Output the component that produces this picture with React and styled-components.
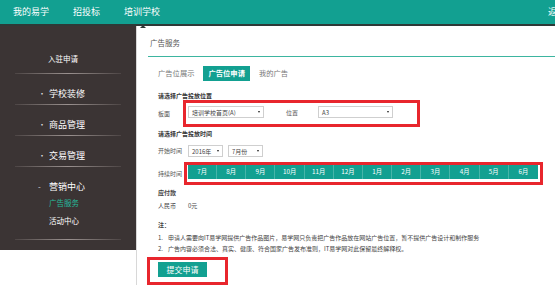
import React from "react";
import styled, { createGlobalStyle } from "styled-components";

const TEAL = "#12a091";
const RED = "#e8262d";

const Global = createGlobalStyle`
  html, body { margin: 0; padding: 0; overflow: hidden; background: #fff; }
  body { font-family: "Noto Sans CJK SC", "Noto Sans", sans-serif; color: #444; }
  * { box-sizing: border-box; }
`;

const Page = styled.div`
  width: 600px;
`;

const TopBar = styled.div`
  position: relative;
  height: 26px;
  background: ${TEAL};
  border-bottom: 2px solid #2e3937;
  display: flex;
  align-items: center;
  padding: 0 16px 0 13px;
`;

const NavItem = styled.div`
  position: relative;
  color: #fff;
  font-size: 9px;
  line-height: 12px;
  margin-right: ${(p) => p.$gap || 0}px;
  margin-left: ${(p) => (p.$right ? "auto" : "0")};
`;

const Caret = styled.div`
  position: absolute;
  left: 16px;
  top: 19px;
  width: 0;
  height: 0;
  border-left: 3px solid transparent;
  border-right: 3px solid transparent;
  border-bottom: 3px solid #2e3937;
`;

const Body = styled.div`
  display: flex;
  align-items: flex-start;
`;

const Sidebar = styled.div`
  width: 136px;
  height: 224px;
  background: #3b3434;
  display: flex;
  flex-direction: column;
`;

const SideHead = styled.div`
  height: 47px;
  padding: 28px 0 0 48px;
  color: #fff;
  font-size: 7.5px;
  line-height: 10px;
`;

const Sep = styled.div`
  height: 1px;
  margin: 0 15px;
  background: linear-gradient(to right, rgba(150,140,138,0.2), #9a918f 50%, rgba(150,140,138,0.2));
`;

const Spacer = styled.div`
  height: ${(p) => p.$h}px;
`;

const SideItem = styled.div`
  display: flex;
  align-items: center;
  height: 30px;
  padding: 14px 0 4px 38px;
  color: #fff;
  font-size: 9px;
  line-height: 12px;
`;

const Bullet = styled.span`
  width: 11px;
  font-size: 8px;
  color: #ddd;
`;

const SubItem = styled.div`
  padding-left: 49px;
  margin-top: ${(p) => p.$mt}px;
  color: ${(p) => (p.$active ? "#26b99a" : "#fff")};
  font-size: 7.5px;
  line-height: 10px;
`;

const Main = styled.div`
  flex: 1;
  background: #fff;
  border-left: 1px solid #d8d8d8;
  min-height: 260px;
`;

const PanelHead = styled.div`
  margin-left: 11px;
  padding: 10px 0 6px 2px;
  border-bottom: 1px solid #3db5a0;
  font-size: 7.5px;
  line-height: 14px;
  color: #555;
`;

const Content = styled.div`
  padding-left: 21px;
  display: flex;
  flex-direction: column;
  align-items: flex-start;
`;

const Tabs = styled.div`
  display: flex;
  gap: 4px;
  margin: 9px 0 0 -5px;
`;

const Tab = styled.div`
  height: 15px;
  padding: 0 5px;
  line-height: 15px;
  font-size: 7.3px;
  color: ${(p) => (p.$active ? "#fff" : "#777")};
  background: ${(p) => (p.$active ? TEAL : "transparent")};
  font-weight: ${(p) => (p.$active ? 700 : 400)};
`;

const SectionTitle = styled.div`
  margin-top: ${(p) => p.$mt}px;
  font-size: 6px;
  line-height: 8px;
  font-weight: 700;
  color: #333;
`;

const Row = styled.div`
  display: flex;
  align-items: center;
  margin-top: ${(p) => p.$mt || 0}px;
`;

const Label = styled.div`
  width: ${(p) => p.$w}px;
  font-size: 6px;
  line-height: 8px;
  color: #555;
`;

const RedBox = styled.div`
  display: flex;
  align-items: center;
  border: 3px solid ${RED};
  padding: ${(p) => p.$pad};
`;

const Select = styled.div`
  width: ${(p) => p.$w}px;
  height: 12px;
  border: 1px solid #cfcfcf;
  background: #fff;
  display: flex;
  align-items: center;
  justify-content: space-between;
  padding: 0 3px;
  margin-right: ${(p) => p.$mr || 0}px;
  font-size: 6px;
  color: #444;
`;

const Arrow = styled.span`
  width: 0;
  height: 0;
  border-left: 1.5px solid transparent;
  border-right: 1.5px solid transparent;
  border-top: 2.5px solid #222;
`;

const InlineLabel = styled.div`
  width: ${(p) => p.$w}px;
  font-size: 6px;
  color: #555;
`;

const Months = styled.div`
  display: grid;
  grid-template-columns: repeat(12, 1fr);
  width: 350px;
  height: 14px;
  background: ${TEAL};
`;

const Month = styled.div`
  border-right: 1px solid rgba(255, 255, 255, 0.22);
  color: #fff;
  font-size: 6.3px;
  line-height: 14px;
  text-align: center;
  &:last-child { border-right: none; }
`;

const Text = styled.div`
  margin-top: ${(p) => p.$mt || 0}px;
  font-size: 6px;
  line-height: ${(p) => p.$lh || 8}px;
  color: #444;
  font-weight: ${(p) => (p.$bold ? 700 : 400)};
  white-space: nowrap;
`;

const Money = styled.span`
  display: inline-block;
  width: 30px;
`;

const NoteNum = styled.span`
  display: inline-block;
  width: 10px;
`;

const SubmitBox = styled(RedBox)`
  margin-top: 3px;
  margin-left: -11px;
`;

const Submit = styled.div`
  width: 49px;
  height: 15px;
  background: ${TEAL};
  color: #fff;
  font-size: 8px;
  line-height: 15px;
  text-align: center;
`;

const months = ["7月", "8月", "9月", "10月", "11月", "12月", "1月", "2月", "3月", "4月", "5月", "6月"];

export default function App() {
  return (
    <Page>
      <Global />
      <TopBar>
        <NavItem $gap={24}>我的易学</NavItem>
        <NavItem $gap={24}>招投标</NavItem>
        <NavItem>
          培训学校
          <Caret />
        </NavItem>
        <NavItem $right>返回首页</NavItem>
      </TopBar>
      <Body>
        <Sidebar>
          <SideHead>入驻申请</SideHead>
          <Sep />
          <SideItem><Bullet>•</Bullet>学校装修</SideItem>
          <Sep />
          <SideItem><Bullet>•</Bullet>商品管理</SideItem>
          <Sep />
          <SideItem><Bullet>•</Bullet>交易管理</SideItem>
          <Sep />
          <SideItem><Bullet>-</Bullet>营销中心</SideItem>
          <SubItem $active $mt={1}>广告服务</SubItem>
          <SubItem $mt={8}>活动中心</SubItem>
          <Spacer $h={13} />
          <Sep />
        </Sidebar>
        <Main>
          <PanelHead>广告服务</PanelHead>
          <Content>
            <Tabs>
              <Tab>广告位展示</Tab>
              <Tab $active>广告位申请</Tab>
              <Tab>我的广告</Tab>
            </Tabs>
            <SectionTitle $mt={11}>请选择广告投放位置</SectionTitle>
            <Row>
              <Label $w={25}>板面</Label>
              <RedBox $pad="3px 24px 6px 2px">
                <Select $w={76} $mr={22}>培训学校首页(A)<Arrow /></Select>
                <InlineLabel $w={32}>位置</InlineLabel>
                <Select $w={75}>A3<Arrow /></Select>
              </RedBox>
            </Row>
            <SectionTitle $mt={3}>请选择广告投放时间</SectionTitle>
            <Row $mt={7}>
              <Label $w={30}>开始时间</Label>
              <Select $w={35} $mr={5}>2016年<Arrow /></Select>
              <Select $w={35}>7月份<Arrow /></Select>
            </Row>
            <Row $mt={5}>
              <Label $w={26}>持续时间</Label>
              <RedBox $pad="0 2px 3px 1px">
                <Months>
                  {months.map((m) => (
                    <Month key={m}>{m}</Month>
                  ))}
                </Months>
              </RedBox>
            </Row>
            <Text $mt={4} $bold>应付款</Text>
            <Text $mt={5}><Money>人民币</Money>0元</Text>
            <Text $mt={11} $bold>注：</Text>
            <Text $mt={3} $lh={11}>
              <NoteNum>1.</NoteNum>申请人需要向IT易学网提供广告作品图片，易学网只负责把广告作品放在网站广告位置，暂不提供广告设计和制作服务
            </Text>
            <Text $lh={11}>
              <NoteNum>2.</NoteNum>广告内容必须合法、真实、健康、符合国家广告发布准则，IT易学网对此保留最终解释权。
            </Text>
            <SubmitBox $pad="2px 18px 5px 8px">
              <Submit>提交申请</Submit>
            </SubmitBox>
          </Content>
        </Main>
      </Body>
    </Page>
  );
}
